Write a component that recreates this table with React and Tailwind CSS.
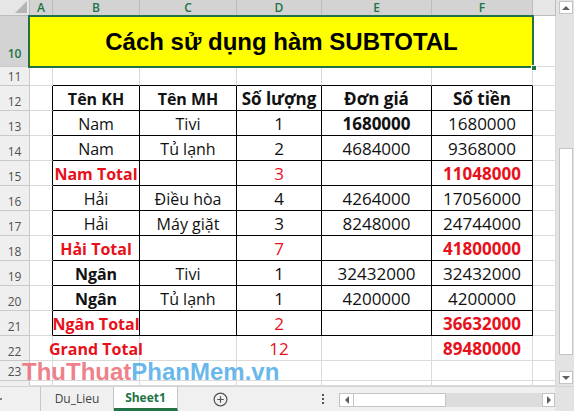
import React from 'react';

const RED = 'text-[#e8101a]';
const cols = ['w-[87px]', 'w-[97px]', 'w-[85px]', 'w-[110px]', 'w-[101px]'];
const letters = ['A', 'B', 'C', 'D', 'E', 'F'];

const rows = [
  { n: 12, type: 'head', cells: ['Tên KH', 'Tên MH', 'Số lượng', 'Đơn giá', 'Số tiền'] },
  { n: 13, cells: ['Nam', 'Tivi', '1', '1680000', '1680000'], bold: [3] },
  { n: 14, cells: ['Nam', 'Tủ lạnh', '2', '4684000', '9368000'] },
  { n: 15, type: 'total', cells: ['Nam Total', '', '3', '', '11048000'] },
  { n: 16, cells: ['Hải', 'Điều hòa', '4', '4264000', '17056000'] },
  { n: 17, cells: ['Hải', 'Máy giặt', '3', '8248000', '24744000'] },
  { n: 18, type: 'total', cells: ['Hải Total', '', '7', '', '41800000'] },
  { n: 19, cells: ['Ngân', 'Tivi', '1', '32432000', '32432000'], bold: [0] },
  { n: 20, cells: ['Ngân', 'Tủ lạnh', '1', '4200000', '4200000'], bold: [0] },
  { n: 21, type: 'total', cells: ['Ngân Total', '', '2', '', '36632000'] },
];

function RowHead({ n, active }) {
  return (
    <div
      className={`w-[30px] shrink-0 h-full flex items-end justify-center border-r border-b border-[#c9c9c9] text-[12px] leading-[16px] ${
        active ? 'bg-[#d3d3d3] text-[#217346] font-semibold pb-[4px]' : 'bg-[#efefef] text-[#505050]'
      }`}
    >
      {n}
    </div>
  );
}

function Cell({ w, line = 'border-[#dadada]', className = '', children }) {
  return (
    <div className={`${w} shrink-0 h-full flex items-end justify-center whitespace-nowrap border-r border-b ${line} ${className}`}>
      {children}
    </div>
  );
}

function cellStyle(row, i) {
  const num = i >= 2;
  let c = num ? 'text-[17px] leading-[22px]' : 'text-[16px] leading-[22px]';
  if (row.type === 'head') return c + ' font-bold text-[#111]';
  if (row.type === 'total') {
    if (i === 2) return c + ' ' + RED;
    return c + ' font-bold ' + RED;
  }
  if (row.bold && row.bold.includes(i)) return c + ' font-bold text-[#111]';
  return c + ' text-[#111]';
}

function Tri({ dir }) {
  const pts = {
    up: '0,5 4,1 8,5',
    down: '0,1 4,5 8,1',
    left: '5,0 1,4 5,8',
    right: '1,0 5,4 1,8',
  }[dir];
  const w = dir === 'up' || dir === 'down' ? 8 : 6;
  const h = dir === 'up' || dir === 'down' ? 6 : 8;
  return (
    <svg width={w} height={h} viewBox={`0 0 ${w} ${h}`}>
      <polygon points={pts} fill="#606060" />
    </svg>
  );
}

export default function App() {
  return (
    <div className="relative w-[574px] h-[411px] overflow-hidden bg-white font-['Open_Sans',sans-serif]">
      <div className="flex h-[386px]">
        {/* sheet grid */}
        <div className="w-[556px] flex flex-col">
          {/* column headers */}
          <div className="h-[16px] flex shrink-0">
            <div className="w-[30px] h-full bg-[#e6e6e6] border-r border-b border-[#bdbdbd] flex items-end justify-end p-[2px]">
              <svg width="12" height="12" viewBox="0 0 12 12">
                <polygon points="0,12 12,0 12,12" fill="#b5b5b5" />
              </svg>
            </div>
            {letters.map((l, i) => (
              <div
                key={l}
                className={`${i === 0 ? 'w-[23px]' : cols[i - 1]} h-full flex items-center justify-center bg-[#d3d3d3] border-r border-b border-r-[#bdbdbd] border-b-[#9fb9a8] text-[12px] leading-[14px] font-semibold text-[#217346]`}
              >
                {l}
              </div>
            ))}
            <div className="w-[23px] h-full bg-[#e6e6e6] border-r border-b border-[#bdbdbd]" />
          </div>

          {/* row 10 - title */}
          <div className="h-[51px] flex shrink-0">
            <RowHead n={10} active />
            <div className="relative w-[503px] h-full bg-[#ffff00] flex items-center justify-center font-['Liberation_Sans',Arial,sans-serif] font-bold text-[24px] text-black">
              Cách sử dụng hàm SUBTOTAL
              <div className="absolute -left-[2px] -top-[1px] -right-[1px] -bottom-[1px] border-2 border-[#217346] pointer-events-none" />
              <div className="absolute -right-[4px] -bottom-[4px] w-[6px] h-[6px] bg-[#217346] border border-white" />
            </div>
            <Cell w="w-[23px]" />
          </div>

          {/* row 11 */}
          <div className="h-[19px] flex shrink-0">
            <RowHead n={11} />
            <Cell w="w-[23px]" />
            {cols.map((w) => (
              <Cell key={w} w={w} line="border-r-[#dadada] border-b-black" />
            ))}
            <Cell w="w-[23px]" />
          </div>

          {/* table rows */}
          {rows.map((row) => (
            <div key={row.n} className="h-[25px] flex shrink-0">
              <RowHead n={row.n} />
              <Cell w="w-[23px]" line="border-r-black border-b-[#dadada]" />
              {row.cells.map((t, i) => (
                <Cell key={i} w={cols[i]} line="border-black" className={cellStyle(row, i)}>
                  {t}
                </Cell>
              ))}
              <Cell w="w-[23px]" />
            </div>
          ))}

          {/* row 22 grand total */}
          <div className="h-[25px] flex shrink-0">
            <RowHead n={22} />
            <Cell w="w-[23px]" />
            <Cell w={cols[0]} className={`text-[16px] leading-[22px] font-bold ${RED}`}>
              Grand Total
            </Cell>
            <Cell w={cols[1]} />
            <Cell w={cols[2]} className={`text-[17px] leading-[22px] ${RED}`}>
              12
            </Cell>
            <Cell w={cols[3]} />
            <Cell w={cols[4]} className={`text-[17px] leading-[22px] font-bold ${RED}`}>
              89480000
            </Cell>
            <Cell w="w-[23px]" />
          </div>

          {/* row 23 */}
          <div className="h-[20px] flex shrink-0">
            <RowHead n={23} />
            <Cell w="w-[23px]" />
            {cols.map((w) => (
              <Cell key={w} w={w} />
            ))}
            <Cell w="w-[23px]" />
          </div>

          {/* row 24 partial */}
          <div className="h-[5px] flex shrink-0 overflow-hidden">
            <div className="w-[30px] h-[25px] bg-[#efefef] border-r border-[#c9c9c9]" />
            <Cell w="w-[23px]" />
            {cols.map((w) => (
              <Cell key={w} w={w} />
            ))}
            <Cell w="w-[23px]" />
          </div>
        </div>

        {/* vertical scrollbar */}
        <div className="w-[18px] h-full bg-[#e3e3e3] flex flex-col items-end pr-[1px]">
          <div className="mt-[1px] w-[14px] h-[13px] bg-white border border-[#c4c4c4] flex items-center justify-center">
            <Tri dir="up" />
          </div>
          <div className="mt-[134px] w-[14px] h-[207px] bg-white border border-[#c4c4c4]" />
          <div className="mt-auto mb-[2px] w-[14px] h-[13px] bg-white border border-[#c4c4c4] flex items-center justify-center">
            <Tri dir="down" />
          </div>
        </div>
      </div>

      {/* sheet tabs bar */}
      <div className="h-[25px] flex bg-[#f0f0f0] border-t border-[#d4d4d4]">
        <div className="w-[41px] h-full border-r border-[#c6c6c6] flex items-center">
          <div className="w-[2px] h-[2px] bg-[#808080] ml-0" />
        </div>
        <div className="w-[73px] h-full border-r border-[#c6c6c6] flex items-center justify-center text-[12px] text-[#444]">
          Du_Lieu
        </div>
        <div className="w-[64px] h-full bg-white border-r border-[#c6c6c6] border-b-[3px] border-b-[#217346] flex items-center justify-center text-[12px] font-bold text-[#217346] pt-[1px]">
          Sheet1
        </div>
        <div className="ml-[28px] w-[28px] h-full flex items-center justify-center">
          <svg width="15" height="15" viewBox="0 0 16 16" fill="none" stroke="#555" strokeWidth="1.3">
            <circle cx="8" cy="8" r="6.8" />
            <path d="M8 4.5v7M4.5 8h7" />
          </svg>
        </div>
        <div className="ml-[84px] w-[10px] h-full flex flex-col items-center justify-center gap-[2px]">
          <div className="w-[2px] h-[2px] bg-[#555]" />
          <div className="w-[2px] h-[2px] bg-[#555]" />
          <div className="w-[2px] h-[2px] bg-[#555]" />
        </div>
        <div className="ml-[11px] mt-[6px] h-[14px] w-[216px] flex bg-[#dcdcdc]">
          <div className="w-[15px] h-full bg-white border border-[#c4c4c4] flex items-center justify-center">
            <Tri dir="left" />
          </div>
          <div className="w-[92px] h-full bg-white border border-l-0 border-[#c4c4c4]" />
          <div className="flex-1" />
          <div className="w-[13px] h-full bg-white border border-[#c4c4c4] flex items-center justify-center">
            <Tri dir="right" />
          </div>
        </div>
        <div className="flex-1 h-full bg-[#e3e3e3]" />
      </div>

      {/* watermark */}
      <div className="absolute left-[22px] top-[360px] font-['Liberation_Sans',Arial,sans-serif] font-bold text-[24px] leading-[24px] whitespace-nowrap pointer-events-none">
        <span className="text-[#ec6f7b]/90">ThuThuat</span>
        <span className="text-[#55aee9]/90">PhanMem.vn</span>
      </div>
    </div>
  );
}
